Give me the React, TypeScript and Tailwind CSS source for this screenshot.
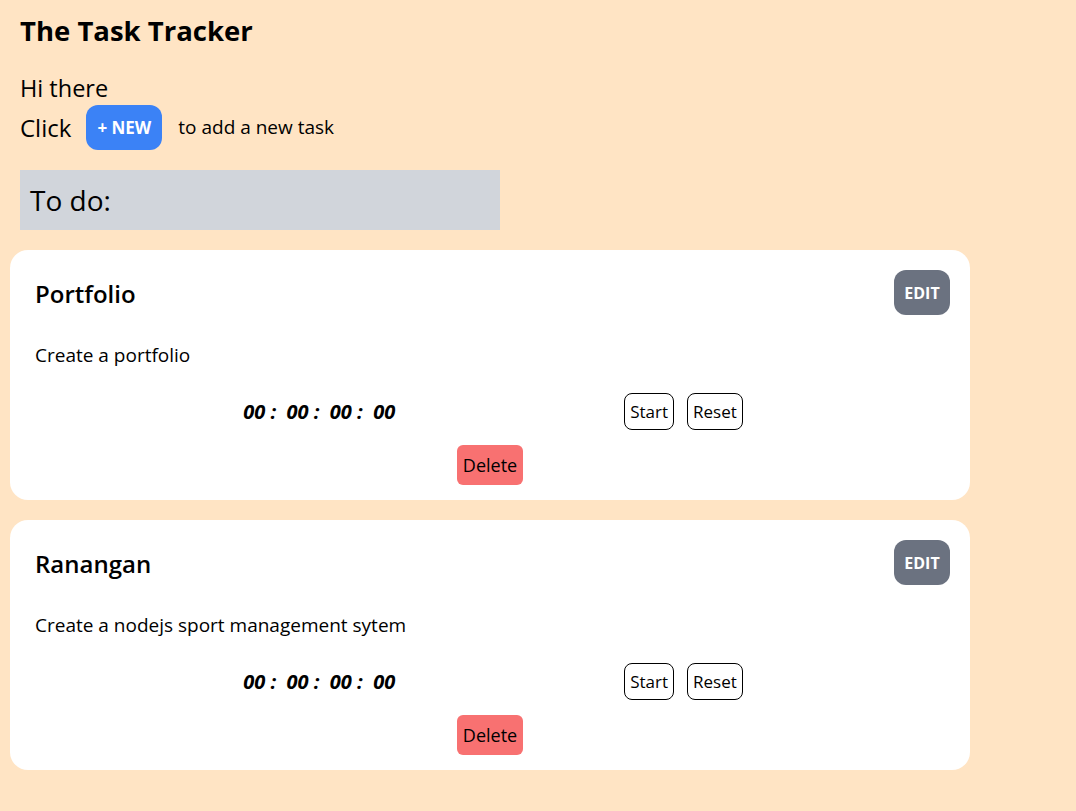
import { useState } from "react";

type Task = { title: string; desc: string };

const TASKS: Task[] = [
  { title: "Portfolio", desc: "Create a portfolio" },
  { title: "Ranangan", desc: "Create a nodejs sport management sytem" },
];

export default function App() {
  return (
    <div
      className="min-h-screen bg-[#ffe4c4] text-black pb-10"
      style={{ fontFamily: '"Segoe UI", "Open Sans", sans-serif' }}
    >
      <div className="px-5">
        <h1 className="pt-[12px] text-[27.5px] font-bold leading-[38px]">The Task Tracker</h1>
        <p className="mt-[23px] text-[23.5px] leading-[30px]">Hi there</p>
        <div className="mt-[2px] flex items-center">
          <span className="text-[24px]">Click</span>
          <button className="ml-[15px] h-[45px] w-[76px] rounded-xl bg-[#3b82f6] text-[17px] font-bold text-white">
            + NEW
          </button>
          <span className="ml-4 text-[19px]">to add a new task</span>
        </div>
        <div className="mt-5 flex h-[60px] w-[480px] items-center bg-[#d1d5db] px-[10px] text-[28px]">
          To do:
        </div>
      </div>

      <div className="mt-5 flex w-[960px] flex-col gap-5 pl-[10px]">
        {TASKS.map((t) => (
          <TaskCard key={t.title} task={t} />
        ))}
      </div>
    </div>
  );
}

function TaskCard({ task }: { task: Task }) {
  const [time] = useState("00 :  00 :  00 :  00");
  return (
    <div className="flex w-[960px] flex-col rounded-[18px] bg-white px-5 pt-5 pb-[15px]">
      <div className="flex items-start justify-between">
        <h2 className="mt-[7px] pl-[5px] text-[24px] font-semibold leading-[34px]">{task.title}</h2>
        <button className="h-[45px] w-[56px] rounded-xl bg-[#6b7280] text-[16px] font-bold text-white">
          EDIT
        </button>
      </div>
      <p className="mt-[27px] pl-[5px] text-[19px] leading-[26px]">{task.desc}</p>
      <div className="mt-[25px] flex items-center justify-center gap-[229px] pl-[6px]">
        <span className="whitespace-pre text-[20px] font-bold italic">{time}</span>
        <div className="flex gap-[13px]">
          <button className="h-[37px] rounded-lg border border-black px-[5px] text-[17px]">Start</button>
          <button className="h-[37px] rounded-lg border border-black px-[5px] text-[17px]">Reset</button>
        </div>
      </div>
      <div className="mt-[15px] flex justify-center">
        <button className="h-[40px] rounded-md bg-[#f87171] px-[6px] text-[18px]">Delete</button>
      </div>
    </div>
  );
}
